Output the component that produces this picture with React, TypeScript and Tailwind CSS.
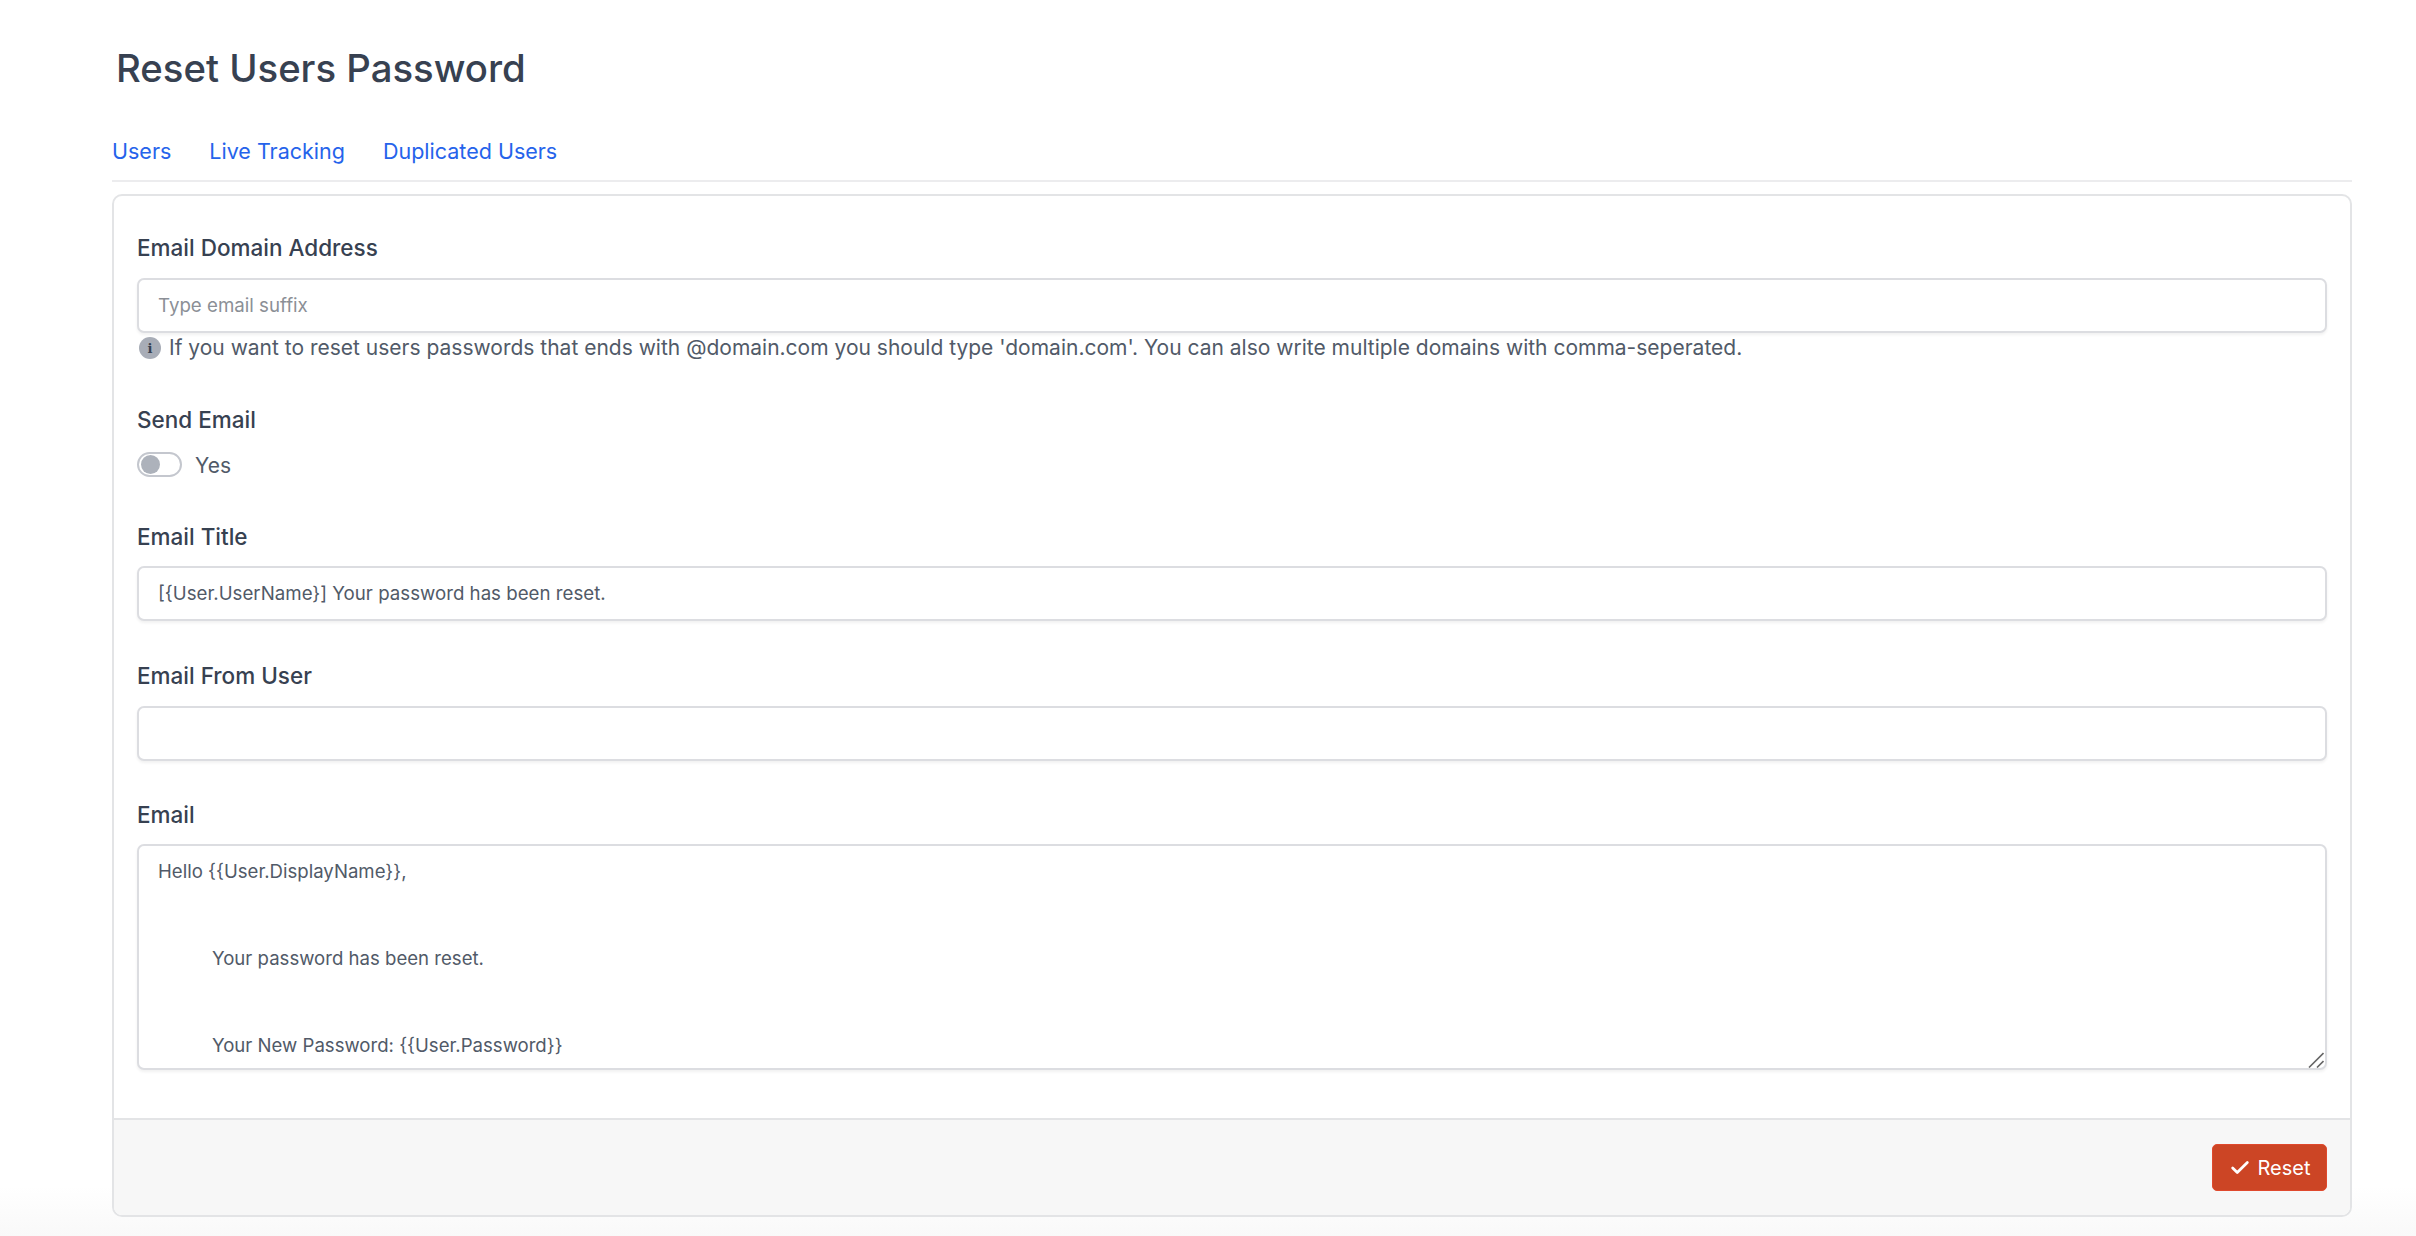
import { Check } from "lucide-react";

const inputClass =
  "block h-[55px] w-full rounded-[7px] border-2 border-[#dcdde1] bg-white px-[19px] text-[18.7px] text-[#515a68] shadow-[0_2px_3px_rgba(0,0,0,0.06)] outline-none placeholder:text-[#8b8f96]";

const emailBody =
  "Hello {{User.DisplayName}},\n\n\n\tYour password has been reset.\n\n\n\tYour New Password: {{User.Password}}";

function Label({ children }: { children: string }) {
  return <label className="block text-[22.5px] leading-[30px] font-medium text-[#374151]">{children}</label>;
}

export default function App() {
  return (
    <div className="min-h-screen bg-[linear-gradient(to_bottom,#ffffff_96%,#f9f9f9_100%)] pr-[64px] pl-[112px] font-['Inter',sans-serif]">
      <h1 className="pt-[44px] pl-[4px] text-[38.3px] leading-[48px] font-medium text-[#374151]">Reset Users Password</h1>

      <nav className="mt-[43px] flex h-[47px] gap-[38px] border-b-2 border-[#ececee] text-[21.5px] leading-[32px] text-[#2563eb]">
        <a href="#">Users</a>
        <a href="#">Live Tracking</a>
        <a href="#">Duplicated Users</a>
      </nav>

      <form className="mt-[12px] rounded-[10px] border-2 border-[#e3e4e6] bg-white">
        <div className="px-[23px] pt-[37px] pb-[48px]">
          <Label>Email Domain Address</Label>
          <input className={`mt-[15px] ${inputClass}`} placeholder="Type email suffix" />
          <p className="mt-[-1px] flex items-center gap-[8px] pl-[2px] text-[21px] leading-[32px] text-[#515a68]">
            <span className="flex h-[22px] w-[22px] items-center justify-center rounded-full bg-[#a8adb7]">
              <span className="font-['DejaVu_Serif',serif] text-[13px] leading-none font-bold text-[#374151]">i</span>
            </span>
            If you want to reset users passwords that ends with @domain.com you should type 'domain.com'. You can also write multiple domains with comma-seperated.
          </p>

          <div className="mt-[41px]">
            <Label>Send Email</Label>
          </div>
          <div className="mt-[11px] flex items-center gap-[13px]">
            <span className="flex h-[25px] w-[45px] items-center rounded-full border-2 border-[#c4c7ce] bg-white pl-[2px]">
              <span className="h-[19px] w-[19px] rounded-full bg-[#adb2bb]" />
            </span>
            <span className="mt-[4px] text-[21px] leading-[32px] text-[#515a68]">Yes</span>
          </div>

          <div className="mt-[40px]">
            <Label>Email Title</Label>
          </div>
          <input
            className={`mt-[14px] ${inputClass}`}
            defaultValue="[{User.UserName}] Your password has been reset."
          />

          <div className="mt-[40px]">
            <Label>Email From User</Label>
          </div>
          <input className={`mt-[15px] ${inputClass}`} />

          <div className="mt-[39px]">
            <Label>Email</Label>
          </div>
          <div className="relative mt-[14px]">
            <textarea
              className="block h-[226px] w-full resize-none rounded-[7px] border-2 border-[#dcdde1] bg-white px-[19px] pt-[11px] text-[18.6px] leading-[29px] text-[#515a68] shadow-[0_2px_3px_rgba(0,0,0,0.06)] outline-none [tab-size:54px]"
              defaultValue={emailBody}
            />
            {/* resize grip */}
            <svg className="pointer-events-none absolute right-[3px] bottom-[2px] h-[16px] w-[16px]" viewBox="0 0 16 16" fill="none">
              <path d="M1 15.5 15.5 1M9 15.5l6.5-6.5" stroke="#666" strokeWidth="1.6" />
            </svg>
          </div>
        </div>

        <div className="flex justify-end rounded-b-[8px] border-t-2 border-[#e3e4e6] bg-[#f7f7f7] px-[23px] py-[24px]">
          <button
            type="button"
            className="flex h-[47px] w-[115px] items-center justify-center gap-[7px] rounded-[5px] border border-[#e0492d] bg-[#cc4525] text-[20px] text-white"
          >
            <Check size={22} strokeWidth={3} />
            Reset
          </button>
        </div>
      </form>
    </div>
  );
}
